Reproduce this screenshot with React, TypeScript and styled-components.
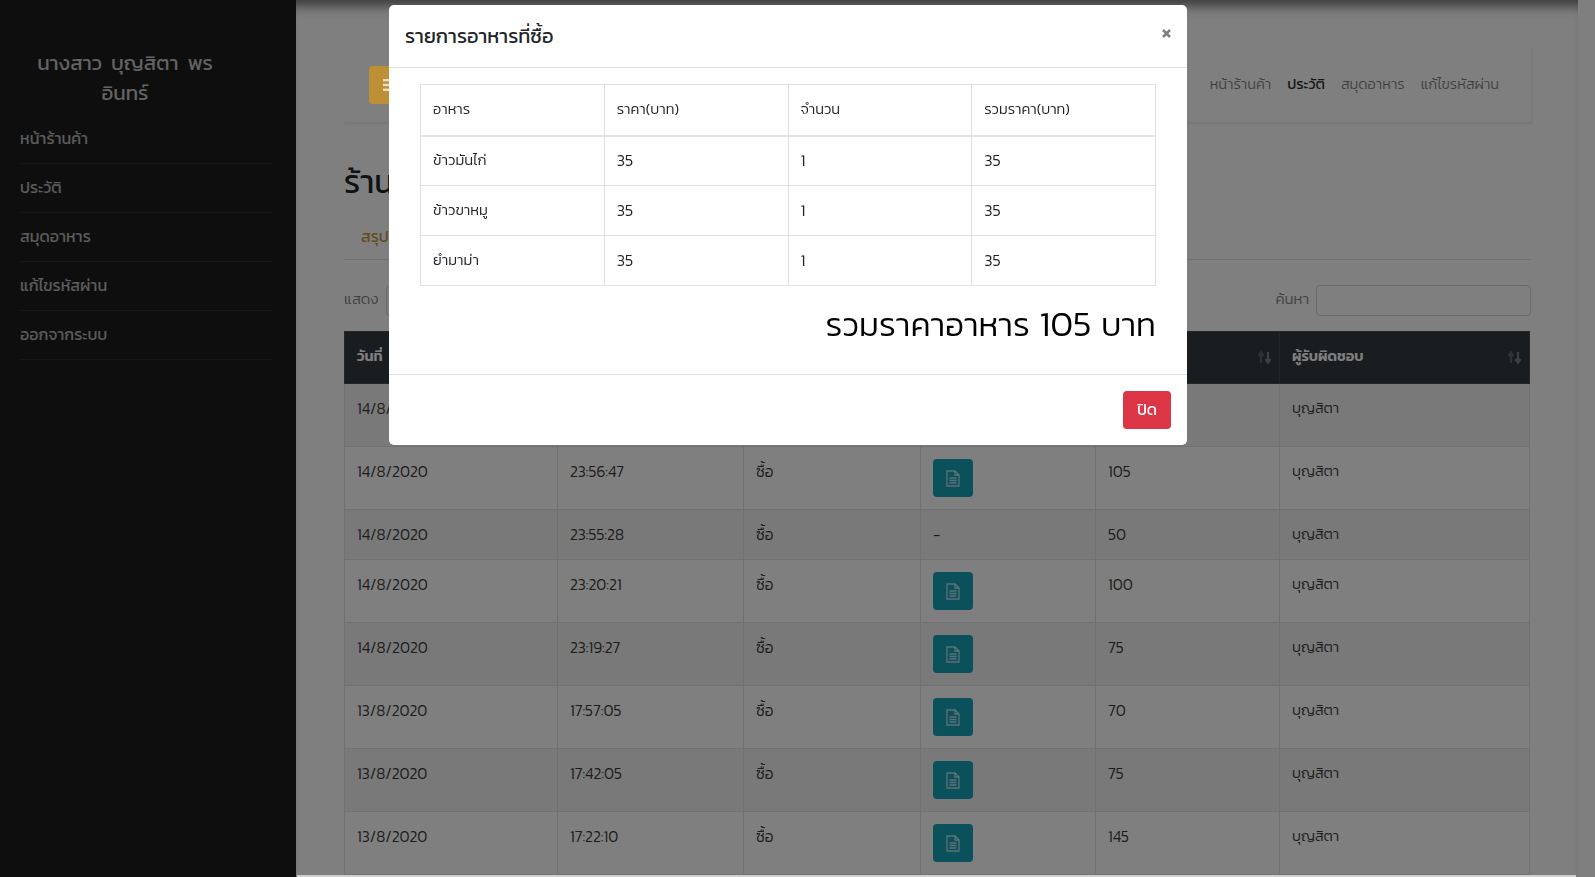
import React from "react";
import styled, { createGlobalStyle } from "styled-components";

const Global = createGlobalStyle`
  html, body { margin: 0; padding: 0; height: 877px; overflow: hidden; background: #fff; }
  body { font-family: "Kanit", "Prompt", "Noto Sans Thai", "Lato", "Noto Sans", sans-serif; font-weight: 300; color: #212529; font-size: 16px; line-height: 25px; }
  * { box-sizing: border-box; }
`;

const Shell = styled.div`
  display: flex;
  height: 877px;
  overflow: hidden;
  padding-right: 17px;
`;

const Sidebar = styled.aside`
  flex: 0 0 296px;
  background: #1c1c1e;
  padding: 48px 24px 0 20px;
  color: #d8d8d8;
`;

const Brand = styled.h3`
  width: 210px;
  margin: 0 0 7px;
  font-size: 20.5px;
  font-weight: 400;
  line-height: 30px;
  word-spacing: 4.5px;
  text-align: center;
  color: #ffffffc0;
`;

const SideItem = styled.a`
  display: block;
  height: 49px;
  padding-top: 11px;
  font-size: 16px;
  font-weight: 400;
  color: #ffffffb0;
  border-bottom: 1px solid #2c2c2e;
`;

const Main = styled.main`
  flex: 1;
  min-width: 0;
  padding: 48px 47px 0 48px;
  box-shadow: inset 0 14px 12px -8px rgba(0, 0, 0, 0.55);
`;

const Navbar = styled.nav`
  display: flex;
  align-items: center;
  justify-content: space-between;
  height: 75px;
  padding: 0 32px 0 25px;
  border-bottom: 1px solid #ececec;
  box-shadow: 1px 1px 3px rgba(0, 0, 0, 0.08);
`;

const MenuButton = styled.button`
  position: relative;
  z-index: 11;
  width: 42px;
  height: 38px;
  border: 0;
  border-radius: 4px;
  padding: 0;
  background: #bd9035;
  display: flex;
  align-items: center;
  justify-content: center;
`;

const NavLinks = styled.div`
  display: flex;
  gap: 16px;
  padding-bottom: 2px;
`;

const NavLink = styled.a<{ $active?: boolean }>`
  font-size: 14.6px;
  font-weight: ${(p) => (p.$active ? 400 : 300)};
  color: ${(p) => (p.$active ? "#000000d8" : "#00000080")};
`;

const Title = styled.h2`
  margin: 37px 0 0;
  font-size: 32px;
  font-weight: 400;
  line-height: 45px;
`;

const Tabs = styled.div`
  margin-top: 12px;
  height: 43px;
  padding: 7px 17px 0;
  border-bottom: 1px solid #dee2e6;
  color: #c9973a;
  font-weight: 400;
`;

const Controls = styled.div`
  display: flex;
  justify-content: space-between;
  align-items: center;
  margin-top: 25px;
  height: 31px;
  font-size: 15px;
  color: #858585;
`;

const ControlLabel = styled.label`
  display: flex;
  align-items: center;
  gap: 7px;
`;

const LabelText = styled.span`
  padding-bottom: 4px;
`;

const SmallSelect = styled.div`
  width: 70px;
  height: 31px;
  border: 1px solid #ced4da;
  border-radius: 4px;
`;

const SearchBox = styled.input`
  width: 215px;
  height: 31px;
  border: 1px solid #ced4da;
  border-radius: 4px;
  background: #fff;
`;

const DataTable = styled.table`
  width: 1185px;
  margin-top: 15px;
  border-collapse: collapse;
  table-layout: fixed;
`;

const HeadCell = styled.th`
  position: relative;
  height: 52px;
  padding: 0 12px 2px;
  background: #343a40;
  border: 1px solid #454d55;
  color: #fff;
  font-size: 14.5px;
  font-weight: 600;
  text-align: left;
`;

const SortMark = styled.svg`
  position: absolute;
  right: 7px;
  top: 18px;
  width: 15px;
  height: 15px;
`;

const Row = styled.tr<{ $odd: boolean }>`
  background: ${(p) => (p.$odd ? "rgba(0,0,0,0.05)" : "transparent")};
`;

const Cell = styled.td<{ $thai?: boolean }>`
  padding: 12px;
  border: 1px solid #dee2e6;
  vertical-align: top;
  color: #3a3a3a;
  font-size: ${(p) => (p.$thai ? "14.5px" : "15.5px")};
  line-height: 25px;
`;

const DocButton = styled.button`
  display: flex;
  align-items: center;
  justify-content: center;
  width: 40px;
  height: 38px;
  border: 0;
  border-radius: 4px;
  background: #17a2b8;
`;

const Backdrop = styled.div`
  position: fixed;
  inset: 0;
  z-index: 10;
  background: rgba(0, 0, 0, 0.5);
`;

const BottomStrip = styled.div`
  position: fixed;
  left: 297px;
  width: 1279px;
  bottom: 0;
  height: 2px;
  z-index: 13;
  background: #cfcfcf;
`;

const ModalLayer = styled.div`
  position: fixed;
  inset: 0;
  z-index: 12;
  padding: 5px 0 0 389px;
`;

const Dialog = styled.section`
  width: 798px;
  height: 440px;
  background: #fff;
  border-radius: 5px;
  display: flex;
  flex-direction: column;
`;

const DialogHead = styled.header`
  display: flex;
  justify-content: space-between;
  height: 63px;
  padding: 16px;
  border-bottom: 1px solid #dee2e6;
`;

const DialogTitle = styled.h5`
  margin: 0;
  font-size: 20px;
  font-weight: 400;
  line-height: 30px;
  color: #212529;
`;

const CloseMark = styled.svg`
  width: 9px;
  height: 9px;
  margin: 8px 0 0;
`;

const DialogBody = styled.div`
  flex: 1;
  padding: 16px 31px 0;
`;

const MiniTable = styled.table`
  width: 100%;
  border-collapse: collapse;
  table-layout: fixed;
`;

const MiniHead = styled.th`
  height: 51px;
  padding: 0 12px 1px;
  border: 1px solid #dee2e6;
  border-bottom-width: 2px;
  font-size: 14.6px;
  font-weight: 300;
  text-align: left;
`;

const MiniCell = styled.td<{ $num?: boolean }>`
  height: 50px;
  padding: 0 12px 1px;
  border: 1px solid #dee2e6;
  font-size: ${(p) => (p.$num ? "16px" : "14.8px")};
`;

const Total = styled.h2`
  margin: 14px 0 0;
  text-align: right;
  font-size: 33.3px;
  font-weight: 300;
  line-height: 48px;
  word-spacing: 2px;
  color: #000;
`;

const TotalNum = styled.span`
  font-size: 35.5px;
`;

const DialogFoot = styled.footer`
  display: flex;
  justify-content: flex-end;
  height: 71px;
  padding: 16px;
  border-top: 1px solid #dee2e6;
`;

const CloseButton = styled.button`
  width: 48px;
  height: 38px;
  border: 0;
  border-radius: 4px;
  padding: 0 0 2px;
  background: #dc3545;
  color: #fff;
  font: inherit;
  font-weight: 400;
`;

const Sort = () => (
  <SortMark viewBox="0 0 15 15" fill="none" strokeWidth="2.2">
    <path d="M4 13V3M1.5 6 4 2.5 6.5 6" stroke="#5f6367" />
    <path d="M11 2v10M8.500 9l2.500 3.500L13.500 9" stroke="#7b7f83" />
  </SortMark>
);

const DocIcon = () => (
  <svg width="14" height="17" viewBox="0 0 14 17" fill="none" stroke="#ffffffb0" strokeWidth="1.300">
    <path d="M1 1h8l4 4v11H1z" />
    <path d="M9 1v4h4" />
    <path d="M3.500 8h7M3.500 10.500h7M3.500 13h7" />
  </svg>
);

const MenuIcon = () => (
  <svg width="14" height="12" viewBox="0 0 14 12" fill="#ffffffb0">
    <rect width="14" height="2.400" />
    <rect y="4.800" width="14" height="2.400" />
    <rect y="9.600" width="14" height="2.400" />
  </svg>
);

const rows = [
  ["14/8/2020", "00:03:14", true, "35"],
  ["14/8/2020", "23:56:47", true, "105"],
  ["14/8/2020", "23:55:28", false, "50"],
  ["14/8/2020", "23:20:21", true, "100"],
  ["14/8/2020", "23:19:27", true, "75"],
  ["13/8/2020", "17:57:05", true, "70"],
  ["13/8/2020", "17:42:05", true, "75"],
  ["13/8/2020", "17:22:10", true, "145"],
] as const;

const columns = [213, 186, 177, 175, 184, 250];
const heads = ["วันที่", "", "", "", "", "ผู้รับผิดชอบ"];
const foods = ["ข้าวมันไก่", "ข้าวขาหมู", "ยำมาม่า"];

export default function App() {
  return (
    <>
      <Global />
      <Shell>
        <Sidebar>
          <Brand>นางสาว บุญสิตา พร อินทร์</Brand>
          {["หน้าร้านค้า", "ประวัติ", "สมุดอาหาร", "แก้ไขรหัสผ่าน", "ออกจากระบบ"].map((t) => (
            <SideItem key={t}>{t}</SideItem>
          ))}
        </Sidebar>
        <Main>
          <Navbar>
            <MenuButton>
              <MenuIcon />
            </MenuButton>
            <NavLinks>
              <NavLink>หน้าร้านค้า</NavLink>
              <NavLink $active>ประวัติ</NavLink>
              <NavLink>สมุดอาหาร</NavLink>
              <NavLink>แก้ไขรหัสผ่าน</NavLink>
            </NavLinks>
          </Navbar>
          <Title>ร้านค้า</Title>
          <Tabs>สรุปรายการ</Tabs>
          <Controls>
            <ControlLabel>
              <LabelText>แสดง</LabelText> <SmallSelect />
            </ControlLabel>
            <ControlLabel>
              <LabelText>ค้นหา</LabelText> <SearchBox />
            </ControlLabel>
          </Controls>
          <DataTable>
            <colgroup>
              {columns.map((w, i) => (
                <col key={i} width={w} />
              ))}
            </colgroup>
            <thead>
              <tr>
                {heads.map((h, i) => (
                  <HeadCell key={i}>
                    {h}
                    <Sort />
                  </HeadCell>
                ))}
              </tr>
            </thead>
            <tbody>
              {rows.map(([d, t, hasDoc, price], i) => (
                <Row key={t} $odd={i % 2 === 0}>
                  <Cell>{d}</Cell>
                  <Cell>{t}</Cell>
                  <Cell>ซื้อ</Cell>
                  <Cell>
                    {hasDoc ? (
                      <DocButton>
                        <DocIcon />
                      </DocButton>
                    ) : (
                      "-"
                    )}
                  </Cell>
                  <Cell>{price}</Cell>
                  <Cell $thai>บุญสิตา</Cell>
                </Row>
              ))}
            </tbody>
          </DataTable>
        </Main>
      </Shell>
      <Backdrop />
      <BottomStrip />
      <ModalLayer>
        <Dialog>
          <DialogHead>
            <DialogTitle>รายการอาหารที่ซื้อ</DialogTitle>
            <CloseMark viewBox="0 0 9 9" stroke="#7f7f7f" strokeWidth="2.600" fill="none">
              <path d="M1 1l7 7M8 1l-7 7" />
            </CloseMark>
          </DialogHead>
          <DialogBody>
            <MiniTable>
              <thead>
                <tr>
                  {["อาหาร", "ราคา(บาท)", "จำนวน", "รวมราคา(บาท)"].map((h) => (
                    <MiniHead key={h}>{h}</MiniHead>
                  ))}
                </tr>
              </thead>
              <tbody>
                {foods.map((f) => (
                  <tr key={f}>
                    <MiniCell>{f}</MiniCell>
                    <MiniCell $num>35</MiniCell>
                    <MiniCell $num>1</MiniCell>
                    <MiniCell $num>35</MiniCell>
                  </tr>
                ))}
              </tbody>
            </MiniTable>
            <Total>
              รวมราคาอาหาร <TotalNum>105</TotalNum> บาท
            </Total>
          </DialogBody>
          <DialogFoot>
            <CloseButton>ปิด</CloseButton>
          </DialogFoot>
        </Dialog>
      </ModalLayer>
    </>
  );
}
